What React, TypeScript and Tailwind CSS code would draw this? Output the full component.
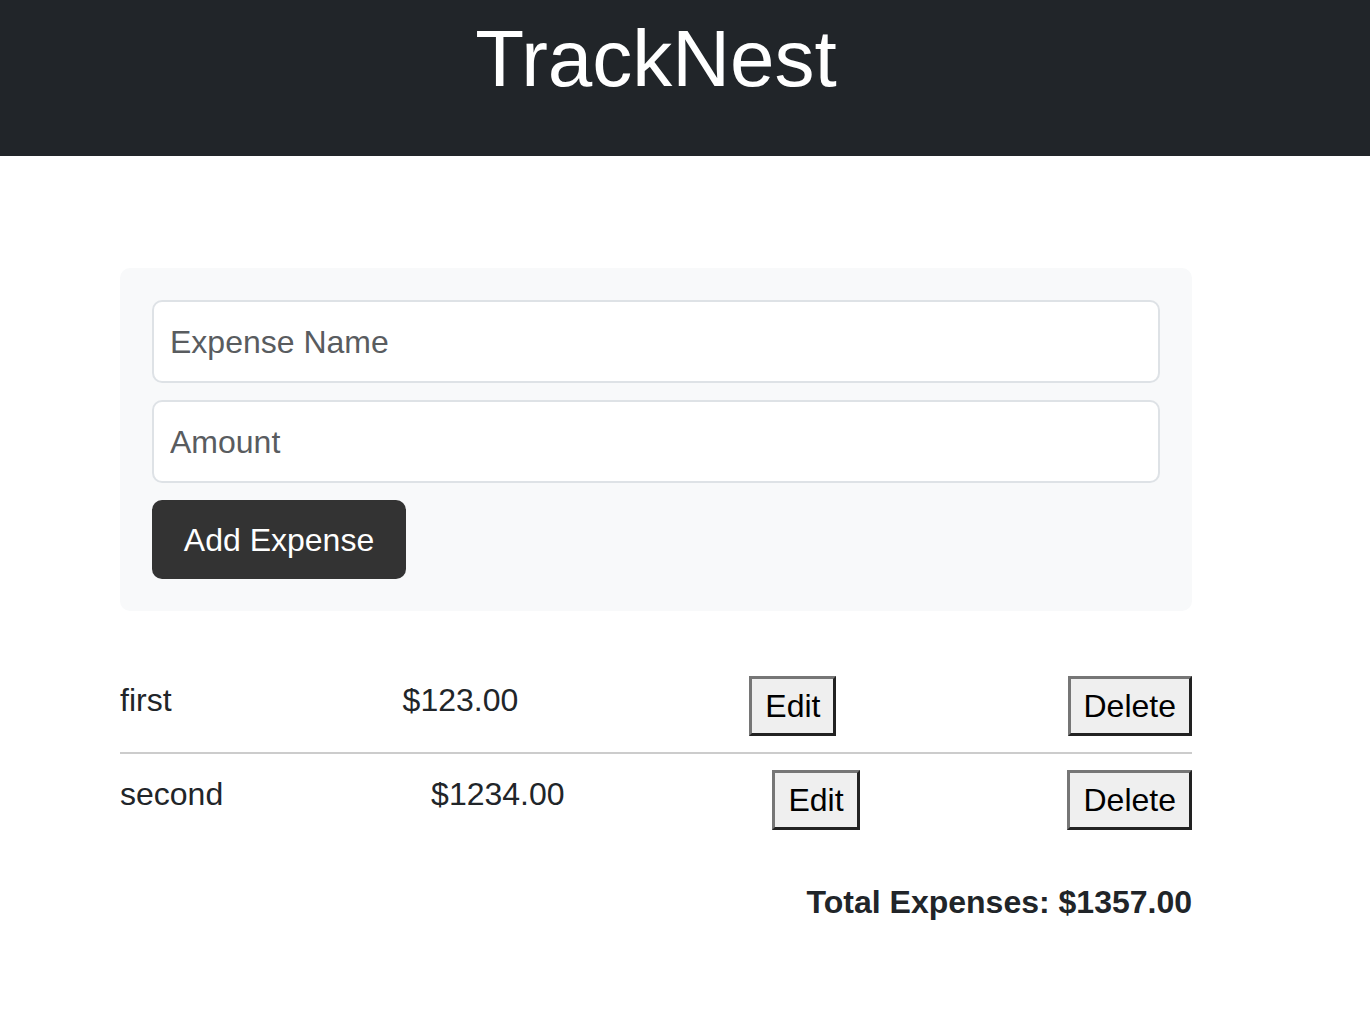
import React, { useState } from "react";

type Expense = { id: number; name: string; amount: number };

const initial: Expense[] = [
  { id: 1, name: "first", amount: 123 },
  { id: 2, name: "second", amount: 1234 },
];

export default function App() {
  const [expenses, setExpenses] = useState<Expense[]>(initial);
  const [name, setName] = useState("");
  const [amount, setAmount] = useState("");

  const total = expenses.reduce((sum, e) => sum + e.amount, 0);

  const addExpense = () => {
    const value = parseFloat(amount);
    if (!name || isNaN(value)) return;
    setExpenses((old) => [...old, { id: Date.now(), name, amount: value }]);
    setName("");
    setAmount("");
  };

  return (
    <div className="min-h-screen bg-white font-['Liberation_Sans',Arial,sans-serif] text-[#212529]">
      <header className="h-[156px] bg-[#212529]">
        <div className="ml-[120px] w-[1072px] pt-[19px] text-center">
          <h1 className="text-[80px] leading-[80px] text-white">TrackNest</h1>
        </div>
      </header>

      <main className="ml-[120px] w-[1072px] pt-[112px]">
        <div className="flex flex-col rounded-[10px] bg-[#f8f9fa] p-8">
          <input
            type="text"
            placeholder="Expense Name"
            value={name}
            onChange={(e) => setName(e.target.value)}
            className="mb-[17px] h-[83px] rounded-[10px] border-2 border-[#dee2e6] bg-white px-4 pt-[2px] text-[32px] outline-none placeholder:text-[#595c5f]"
          />
          <input
            type="number"
            placeholder="Amount"
            value={amount}
            onChange={(e) => setAmount(e.target.value)}
            className="mb-[17px] h-[83px] rounded-[10px] border-2 border-[#dee2e6] bg-white px-4 pt-[2px] text-[32px] outline-none placeholder:text-[#595c5f]"
          />
          <button
            onClick={addExpense}
            className="h-[79px] w-[254px] rounded-[10px] bg-[#333333] text-[32px] text-white"
          >
            Add Expense
          </button>
        </div>

        <ul className="mt-[49px]">
          {expenses.map((e, i) => (
            <li
              key={e.id}
              className={
                i < expenses.length - 1
                  ? "flex items-start justify-between border-b-2 border-[#cccccc] py-4 text-[32px]"
                  : "flex items-start justify-between py-4 text-[32px]"
              }
            >
              <span className="mt-[6px] leading-[37px]">{e.name}</span>
              <span className="mt-[6px] leading-[37px]">${e.amount.toFixed(2)}</span>
              <button className="h-[60px] border-[3px] border-t-[#767676] border-l-[#767676] border-r-[#222222] border-b-[#222222] bg-[#efefef] px-[13px] text-[32px] leading-[37px] text-black">
                Edit
              </button>
              <button
                onClick={() => setExpenses((old) => old.filter((x) => x.id !== e.id))}
                className="h-[60px] border-[3px] border-t-[#767676] border-l-[#767676] border-r-[#222222] border-b-[#222222] bg-[#efefef] px-[13px] text-[32px] leading-[37px] text-black"
              >
                Delete
              </button>
            </li>
          ))}
        </ul>

        <p className="mt-[32px] text-right text-[32px] font-bold">
          Total Expenses: ${total.toFixed(2)}
        </p>
      </main>
    </div>
  );
}
